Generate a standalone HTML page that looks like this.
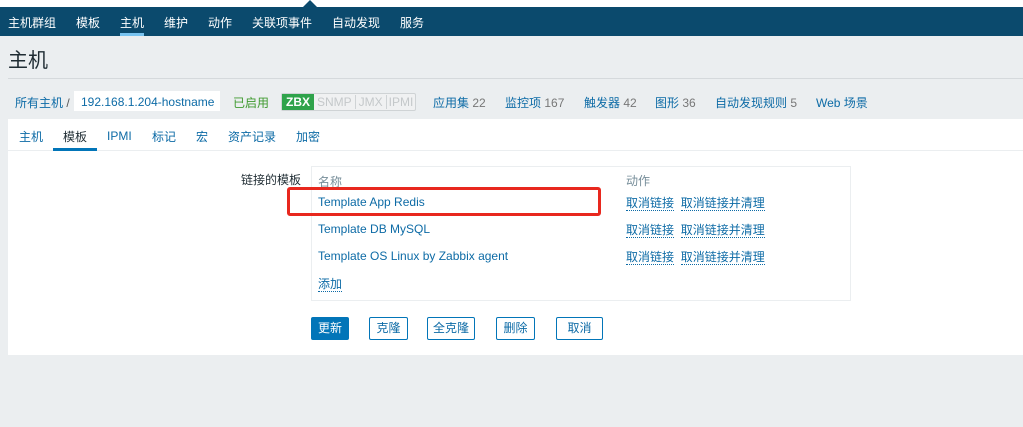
<!DOCTYPE html>
<html><head><meta charset="utf-8"><style>
*{margin:0;padding:0;box-sizing:border-box}
body{width:1023px;height:427px;background:#ebeef0;font-family:"Liberation Sans","Noto Sans CJK SC",sans-serif;font-size:12px;color:#1f2c33;position:relative;overflow:hidden}
.a{position:absolute;white-space:nowrap}
.top{left:0;top:0;width:1023px;height:7px;background:#fff}
.nav{left:0;top:7px;width:1023px;height:29px;background:#0b4a6d}
.nav span{position:absolute;top:7px;color:#fff;font-size:12px}
.lnk{color:#0d6ba6}
.dot{border-bottom:1px dotted #0d6ba6}
.btn{position:absolute;top:317px;height:23px;border:1px solid #0275b8;background:#fff;color:#0d6ba6;text-align:center;line-height:21px;border-radius:2px}
</style></head><body>
<div class="a top"></div>
<div class="a" style="left:303px;top:0;width:0;height:0;border-left:7px solid transparent;border-right:7px solid transparent;border-bottom:7px solid #0b4a6d"></div>
<div class="a nav">
<span style="left:8px">主机群组</span><span style="left:76px">模板</span><span style="left:120px">主机</span><span style="left:164px">维护</span><span style="left:208px">动作</span><span style="left:252px">关联项事件</span><span style="left:332px">自动发现</span><span style="left:400px">服务</span>
<div style="position:absolute;left:120px;top:26px;width:24px;height:3px;background:#78c3f0"></div>
</div>
<div class="a" style="left:8px;top:44px;font-size:20px;color:#1f2c33">主机</div>
<div class="a" style="left:8px;top:78px;width:1015px;height:1px;background:#d5d9dc"></div>
<div class="a lnk" style="left:15px;top:94px">所有主机 <span style="color:#555">/</span></div>
<div class="a lnk" style="left:74px;top:91px;width:146px;height:20px;background:#fff;padding:4px 0 0 7px">192.168.1.204-hostname</div>
<div class="a" style="left:233px;top:94px;color:#3f9a2f">已启用</div>
<div class="a" style="left:281px;top:93px;height:18px;border:1px solid #cfd3d5;border-radius:2px;background:#f0f1f2;font-size:12px;line-height:16px">
<span style="display:inline-block;background:#2fa34b;color:#fff;font-weight:bold;padding:0 4px">ZBX</span><span style="color:#c4c8ca;padding:0 3px;border-right:1px solid #cfd3d5">SNMP</span><span style="color:#c4c8ca;padding:0 3px;border-right:1px solid #cfd3d5">JMX</span><span style="color:#c4c8ca;padding:0 2px">IPMI</span></div>
<div class="a lnk" style="left:433px;top:94px">应用集 <span style="color:#777">22</span></div>
<div class="a lnk" style="left:505px;top:94px">监控项 <span style="color:#777">167</span></div>
<div class="a lnk" style="left:584px;top:94px">触发器 <span style="color:#777">42</span></div>
<div class="a lnk" style="left:655px;top:94px">图形 <span style="color:#777">36</span></div>
<div class="a lnk" style="left:715px;top:94px">自动发现规则 <span style="color:#777">5</span></div>
<div class="a lnk" style="left:816px;top:94px">Web 场景</div>
<div class="a" style="left:8px;top:119px;width:1015px;height:236px;background:#fff"></div>
<div class="a" style="left:8px;top:150px;width:1015px;height:1px;background:#ebeef0"></div>
<div class="a lnk" style="left:19px;top:128px">主机</div>
<div class="a" style="left:63px;top:128px">模板</div>
<div class="a" style="left:53px;top:148px;width:44px;height:3px;background:#0275b8"></div>
<div class="a lnk" style="left:107px;top:129px">IPMI</div>
<div class="a lnk" style="left:152px;top:128px">标记</div>
<div class="a lnk" style="left:196px;top:128px">宏</div>
<div class="a lnk" style="left:228px;top:128px">资产记录</div>
<div class="a lnk" style="left:296px;top:128px">加密</div>
<div class="a" style="left:241px;top:171px">链接的模板</div>
<div class="a" style="left:311px;top:166px;width:540px;height:135px;border:1px solid #ebeef0"></div>
<div class="a" style="left:318px;top:173px;color:#768d99">名称</div>
<div class="a" style="left:626px;top:172px;color:#768d99">动作</div>
<div class="a lnk" style="left:318px;top:195px">Template App Redis</div>
<div class="a lnk" style="left:318px;top:222px">Template DB MySQL</div>
<div class="a lnk" style="left:318px;top:249px">Template OS Linux by Zabbix agent</div>
<div class="a lnk" style="left:318px;top:275px"><span class="dot">添加</span></div>
<div class="a lnk" style="left:626px;top:194px"><span class="dot">取消链接</span>&nbsp;&nbsp;<span class="dot">取消链接并清理</span></div>
<div class="a lnk" style="left:626px;top:221px"><span class="dot">取消链接</span>&nbsp;&nbsp;<span class="dot">取消链接并清理</span></div>
<div class="a lnk" style="left:626px;top:248px"><span class="dot">取消链接</span>&nbsp;&nbsp;<span class="dot">取消链接并清理</span></div>
<div class="a" style="left:287px;top:187px;width:314px;height:29px;border:3px solid #e8281e;border-radius:3px"></div>
<div class="btn" style="left:311px;width:38px;background:#0275b8;color:#fff">更新</div>
<div class="btn" style="left:369px;width:39px">克隆</div>
<div class="btn" style="left:427px;width:48px">全克隆</div>
<div class="btn" style="left:496px;width:39px">删除</div>
<div class="btn" style="left:556px;width:47px">取消</div>
</body></html>
